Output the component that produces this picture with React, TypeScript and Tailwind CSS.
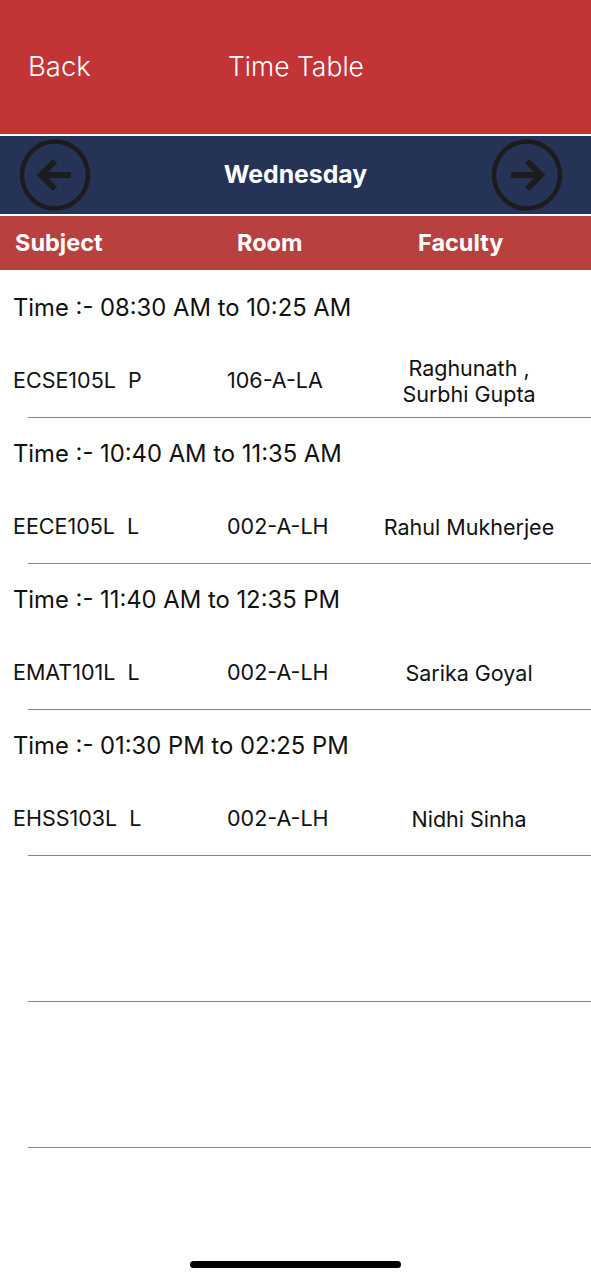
const sessions = [
  { time: '08:30 AM to 10:25 AM', subject: 'ECSE105L  P', room: '106-A-LA', faculty: ['Raghunath ,', 'Surbhi Gupta'] },
  { time: '10:40 AM to 11:35 AM', subject: 'EECE105L  L', room: '002-A-LH', faculty: ['Rahul Mukherjee'] },
  { time: '11:40 AM to 12:35 PM', subject: 'EMAT101L  L', room: '002-A-LH', faculty: ['Sarika Goyal'] },
  { time: '01:30 PM to 02:25 PM', subject: 'EHSS103L  L', room: '002-A-LH', faculty: ['Nidhi Sinha'] },
];

const ArrowCircle = ({ dir }: { dir: 'left' | 'right' }) => (
  <svg width="72" height="72" viewBox="0 0 72 72" fill="none" stroke="#1c1c1e">
    <ellipse cx="36" cy="36" rx="33" ry="33.5" strokeWidth="4.5" />
    {dir === 'left' ? (
      <path d="M52 36H22M36 22L22 36L36 50" strokeWidth="6" strokeLinejoin="miter" />
    ) : (
      <path d="M20 36H50M36 22L50 36L36 50" strokeWidth="6" strokeLinejoin="miter" />
    )}
  </svg>
);

export default function App() {
  return (
    <div className="w-[591px] h-[1280px] bg-white flex flex-col font-['Inter','Roboto',sans-serif] text-[#111]">
      {/* top bar */}
      <div className="h-[134px] bg-[#c33437] flex items-center text-white text-[26.5px] font-light">
        <span className="w-[228px] pl-[28px] text-[27.5px]">Back</span>
        <span>Time Table</span>
      </div>
      <div className="h-[2px] bg-white" />

      {/* day switcher */}
      <div className="h-[78px] bg-[#253456] flex items-center">
        <div className="w-[120px] pl-[19px] flex">
          <ArrowCircle dir="left" />
        </div>
        <span className="flex-1 text-center text-white text-[24.8px] font-bold">Wednesday</span>
        <div className="w-[120px] pr-[28px] flex justify-end">
          <ArrowCircle dir="right" />
        </div>
      </div>
      <div className="h-[2px] bg-white" />

      {/* column headers */}
      <div className="h-[54px] bg-[#b8403e] flex items-center text-white text-[23.5px] font-bold">
        <span className="w-[237px] pl-[15px]">Subject</span>
        <span className="w-[181px]">Room</span>
        <span>Faculty</span>
      </div>
      <div className="h-[2px] bg-white" />

      {sessions.map((s) => (
        <div key={s.time} className="h-[146px] flex flex-col justify-between">
          <div className="h-[72px] flex items-center pl-[13px] text-[23.8px]">Time :- {s.time}</div>
          <div>
            <div className="h-[72px] flex items-center text-[21.5px]">
              <span className="w-[227px] pl-[13px] whitespace-pre">{s.subject}</span>
              <span className="w-[155px]">{s.room}</span>
              <span className="w-[174px] text-center leading-[26px]">
                {s.faculty.map((f) => (
                  <span key={f} className="block">{f}</span>
                ))}
              </span>
            </div>
            <div className="ml-[28px] h-[1.5px] bg-[#e65a68]" />
          </div>
        </div>
      ))}

      {[0, 1].map((i) => (
        <div key={i} className="h-[146px] flex flex-col justify-end">
          <div className="ml-[28px] h-[1.5px] bg-[#e65a68]" />
        </div>
      ))}

      <div className="mt-auto mb-[12px] flex justify-center">
        <div className="w-[211px] h-[7px] rounded-full bg-black" />
      </div>
    </div>
  );
}
